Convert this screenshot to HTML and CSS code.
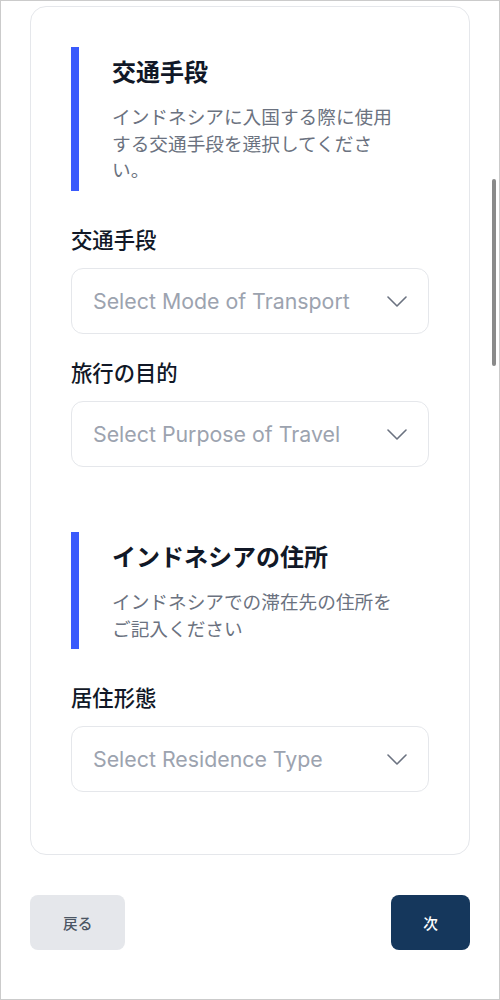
FILE: index.html
```html
<!DOCTYPE html>
<html lang="ja">
<head>
    <meta charset="UTF-8">
    <meta name="viewport" content="width=device-width, initial-scale=1.0">
    <title>入国情報</title>
    <link rel="stylesheet" href="styles.css">
</head>
<body>
    <div class="card">
        <!-- 交通手段 -->
        <div class="intro">
            <h2>交通手段</h2>
            <p>インドネシアに入国する際に使用する交通手段を選択してください。</p>
        </div>

        <div class="field field-first">
            <label for="transport">交通手段</label>
            <div class="select-wrap">
                <select id="transport">
                    <option value="">Select Mode of Transport</option>
                </select>
                <svg class="chevron" width="20" height="11" viewBox="0 0 20 11"><path d="M1 1 L10 10 L19 1" /></svg>
            </div>
        </div>

        <div class="field">
            <label for="purpose">旅行の目的</label>
            <div class="select-wrap">
                <select id="purpose">
                    <option value="">Select Purpose of Travel</option>
                </select>
                <svg class="chevron" width="20" height="11" viewBox="0 0 20 11"><path d="M1 1 L10 10 L19 1" /></svg>
            </div>
        </div>

        <!-- インドネシアの住所 -->
        <div class="intro intro-next">
            <h2>インドネシアの住所</h2>
            <p>インドネシアでの滞在先の住所をご記入ください</p>
        </div>

        <div class="field field-first">
            <label for="residence">居住形態</label>
            <div class="select-wrap">
                <select id="residence">
                    <option value="">Select Residence Type</option>
                </select>
                <svg class="chevron" width="20" height="11" viewBox="0 0 20 11"><path d="M1 1 L10 10 L19 1" /></svg>
            </div>
        </div>
    </div>

    <div class="actions">
        <button class="btn btn-back">戻る</button>
        <button class="btn btn-next">次</button>
    </div>

    <div class="scrollbar"></div>
</body>
</html>
```

FILE: styles.css
```css
* {
    box-sizing: border-box;
}
body {
    margin: 0;
    min-height: 1000px;
    padding: 5px 29px 40px;
    border: 1px solid #cbcbcb;
    background-color: #fff;
    font-family: Inter, "Noto Sans CJK JP", sans-serif;
    color: #111827;
}
.card {
    border: 1px solid #e5e7eb;
    border-radius: 16px;
    padding: 40px 40px 62px;
}
.intro {
    border-left: 8px solid #3a5afc;
    padding: 8px 0 6px 33px;
}
.intro h2 {
    margin: 0;
    font-size: 24px;
    line-height: 36px;
    font-weight: 700;
    color: #111827;
}
.intro p {
    margin: 14px 0 0;
    max-width: 290px;
    font-size: 18.67px;
    line-height: 26.67px;
    color: #6b7280;
}
.intro-next {
    margin-top: 65px;
}
.field {
    margin-top: 25px;
}
.field-first {
    margin-top: 35px;
}
.field label {
    display: block;
    font-size: 21.33px;
    line-height: 28px;
    font-weight: 500;
    margin-bottom: 14px;
}
.select-wrap {
    position: relative;
}
.select-wrap select {
    display: block;
    width: 100%;
    height: 66px;
    padding: 0 60px 0 21px;
    border: 1px solid #e5e7eb;
    border-radius: 12px;
    background-color: #fff;
    font-family: Inter, "Noto Sans CJK JP", sans-serif;
    font-size: 21.33px;
    color: #9ca3af;
    appearance: none;
    -webkit-appearance: none;
}
.chevron {
    position: absolute;
    right: 22px;
    top: 28px;
    fill: none;
    stroke: #6b7280;
    stroke-width: 1.6;
    stroke-linecap: round;
    stroke-linejoin: round;
}
.actions {
    display: flex;
    justify-content: space-between;
    align-items: center;
    margin-top: 40px;
}
.btn {
    height: 55px;
    padding: 0 32px;
    border: none;
    border-radius: 8px;
    font-family: Inter, "Noto Sans CJK JP", sans-serif;
    font-size: 14.67px;
    font-weight: 500;
    cursor: pointer;
}
.btn-back {
    padding: 0 33px;
    background-color: #e5e7eb;
    color: #4b5563;
}
.btn-next {
    background-color: #15375c;
    color: #fff;
}
.scrollbar {
    position: fixed;
    top: 179px;
    right: 4px;
    width: 4px;
    height: 187px;
    border-radius: 2px;
    background-color: #8a8a8a;
}
```
